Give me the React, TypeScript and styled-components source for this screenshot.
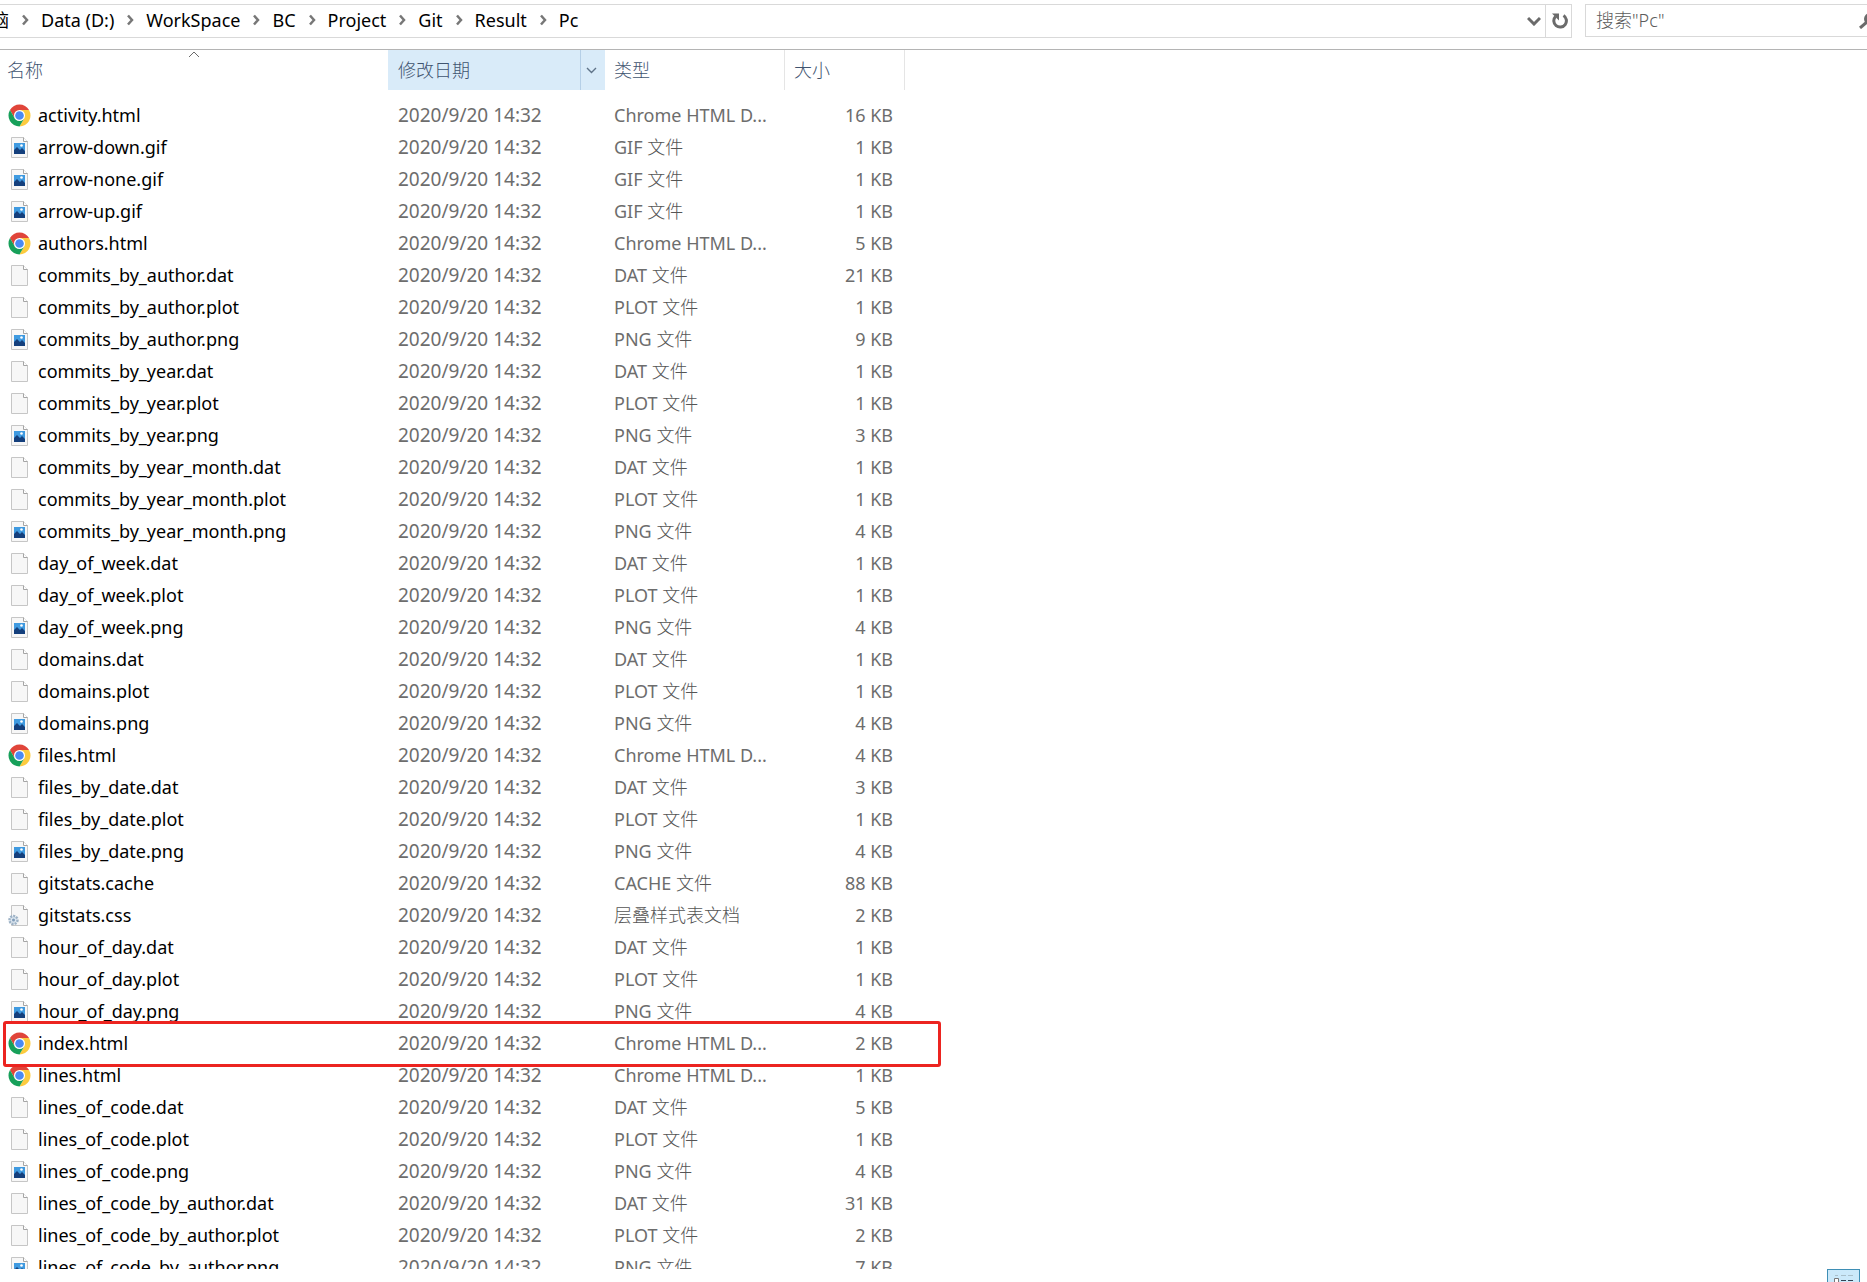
import React from "react";
import styled, { createGlobalStyle } from "styled-components";

const GlobalStyle = createGlobalStyle`
  * { box-sizing: border-box; }
  body {
    margin: 0;
    background: #fff;
    color: #000;
    font: 18px/24px "Noto Sans", "Noto Sans CJK SC", sans-serif;
  }
  button, input { font: inherit; }
`;

const Window = styled.div`
  display: flex;
  flex-direction: column;
  height: 100vh;
  overflow: hidden;
`;

const Toolbar = styled.header`
  display: flex;
  gap: 13px;
  height: 50px;
  padding-top: 4px;
  border-bottom: 1px solid #b4b4b4;
`;

const AddressBar = styled.nav`
  flex: 1;
  display: flex;
  align-items: center;
  height: 34px;
  border: 1px solid #d9d9d9;
  border-left: 0;
`;

const Crumbs = styled.ol`
  flex: 1;
  display: flex;
  align-items: center;
  margin: 0;
  padding: 0 0 2px;
  list-style: none;
`;

const Crumb = styled.li`
  display: flex;
  align-items: center;
  gap: 12px;
  margin-right: 12px;
  white-space: nowrap;
`;

const CrumbLink = styled.a<{ $clipped?: boolean }>`
  display: flex;
  justify-content: flex-end;
  width: ${(p) => (p.$clipped ? "9px" : "auto")};
  overflow: ${(p) => (p.$clipped ? "hidden" : "visible")};
  color: #000;
  text-decoration: none;
`;

const BarButton = styled.button<{ $divided?: boolean }>`
  display: flex;
  align-items: center;
  justify-content: center;
  width: ${(p) => (p.$divided ? "26px" : "22px")};
  height: 32px;
  padding: 0;
  border: 0;
  border-left: ${(p) => (p.$divided ? "1px solid #d9d9d9" : "0")};
  background: none;
  color: #6b6b6b;
`;

const SearchBox = styled.form`
  display: flex;
  align-items: center;
  width: 282px;
  height: 33px;
  border: 1px solid #d9d9d9;
  border-right: 0;
  color: #6b6b6b;
`;

const SearchInput = styled.input`
  flex: 1;
  min-width: 0;
  padding: 0 10px 2px;
  border: 0;
  outline: 0;
  background: none;
  font-weight: 300;
  &::placeholder { color: #5c5c5c; opacity: 1; }
`;

const SearchButton = styled.button`
  display: flex;
  width: 8px;
  height: 24px;
  padding: 4px 0;
  border: 0;
  overflow: hidden;
  background: none;
  color: #6b6b6b;
  svg { flex: none; }
`;

const ListPane = styled.main`
  flex: 1;
  min-height: 0;
  overflow: hidden;
`;

const FileTable = styled.table`
  width: 905px;
  table-layout: fixed;
  border-collapse: separate;
  border-spacing: 0;
`;

const HeadCell = styled.th<{ $hot?: boolean; $divided?: boolean }>`
  position: relative;
  height: 40px;
  padding: 0;
  background: ${(p) => (p.$hot ? "#d9ebf9" : "#fff")};
  border-right: ${(p) => (p.$divided ? "1px solid #e5e5e5" : "0")};
  color: #3f5470;
  font-weight: 300;
  text-align: left;
`;

const HeadInner = styled.div<{ $inset?: number }>`
  display: flex;
  align-items: center;
  justify-content: space-between;
  height: 40px;
  padding-left: ${(p) => p.$inset ?? 9}px;
`;

const SortButton = styled.button`
  padding: 0;
  border: 0;
  background: none;
  color: inherit;
`;

const FilterButton = styled.button`
  display: flex;
  align-items: center;
  width: 25px;
  height: 40px;
  padding: 0 0 0 5px;
  border: 0;
  border-left: 1px solid #b5cfe7;
  background: none;
  color: #5f7388;
`;

const SortMark = styled.span`
  position: absolute;
  top: 1px;
  left: 50%;
  display: flex;
  margin-left: -6px;
  color: #6b6b6b;
`;

const Spacer = styled.tr`
  height: 9px;
  td { padding: 0; }
`;

const Row = styled.tr`
  position: relative;
  height: 32px;
`;

const Marker = styled.span`
  position: absolute;
  z-index: 1;
  top: -6px;
  left: 3px;
  width: 938px;
  height: 46px;
  border: 3px solid #ec2420;
  border-radius: 3px;
`;

const Cell = styled.td<{ $right?: boolean }>`
  height: 32px;
  padding: 0 12px 0 9px;
  color: #6d6d6d;
  white-space: nowrap;
  text-align: ${(p) => (p.$right ? "right" : "left")};
`;

const DateCell = styled(Cell)`
  padding-left: 10px;
  font-size: 19px;
`;

const NameCell = styled(Cell)`
  padding: 0 8px;
  color: #000;
`;

const FileName = styled.div`
  display: flex;
  align-items: center;
  gap: 7px;
  svg { flex: none; }
`;

const Han = styled.span`
  color: #555;
  font-weight: 300;
`;

const StatusBar = styled.footer`
  display: flex;
  justify-content: flex-end;
  height: 13px;
  padding-right: 7px;
  overflow: hidden;
`;

const ViewButton = styled.button`
  display: flex;
  justify-content: center;
  width: 33px;
  height: 26px;
  padding: 4px 0;
  border: 1px solid #3f8fb5;
  background: #cbe9fa;
`;

const Chevron = () => (
  <svg width="8" height="12" viewBox="0 0 8 12" fill="none" stroke="#777" strokeWidth="2.5">
    <path d="M2 1.500l4 4.500-4 4.500" />
  </svg>
);

const ChromeIcon = () => (
  <svg width="23" height="23" viewBox="0 0 48 48">
    <circle cx="24" cy="24" r="23" fill="#fff" />
    <path d="M4.1 12.5A23 23 0 0 1 43.9 12.5L24 12.5 14 29.8z" fill="#e0453a" />
    <path d="M43.9 12.5A23 23 0 0 1 24 47L34 29.8 24 12.5z" fill="#fccb3f" />
    <path d="M24 47A23 23 0 0 1 4.1 12.5L14 29.8 34 29.8z" fill="#17a05a" />
    <circle cx="24" cy="24" r="11.5" fill="#fff" />
    <circle cx="24" cy="24" r="9" fill="#4a8af4" />
  </svg>
);

const Sheet = ({ children }: { children?: React.ReactNode }) => (
  <svg width="23" height="23" viewBox="0 0 23 23">
    <path d="M3.5 1.5h12l4 4v16h-16z" fill="#f7f7f7" stroke="#c6c6c6" />
    <path d="M15.5 1.5v4h4" fill="#fff" stroke="#a5a5a5" />
    {children}
  </svg>
);

const ImageIcon = () => (
  <Sheet>
    <path d="M6 7h11v11H6z" fill="#3f9ae0" />
    <path d="M6 14l3-3 3 3 2-2 3 3v3H6z" fill="#143f7c" />
    <circle cx="13.5" cy="9.5" r="1.3" fill="#fff" />
  </Sheet>
);

const CssIcon = () => (
  <Sheet>
    <circle cx="5.500" cy="16" r="4" fill="#dce6ef" stroke="#9db2c6" strokeWidth="2.5" strokeDasharray="2 1" />
    <circle cx="5.500" cy="16" r="1.5" fill="#7f9bb8" />
  </Sheet>
);

type Kind = "html" | "image" | "plain" | "css";
const icons: Record<Kind, React.FC> = { html: ChromeIcon, image: ImageIcon, plain: Sheet, css: CssIcon };

const files: [string, number][] = [
  ["activity.html", 16],
  ["arrow-down.gif", 1],
  ["arrow-none.gif", 1],
  ["arrow-up.gif", 1],
  ["authors.html", 5],
  ["commits_by_author.dat", 21],
  ["commits_by_author.plot", 1],
  ["commits_by_author.png", 9],
  ["commits_by_year.dat", 1],
  ["commits_by_year.plot", 1],
  ["commits_by_year.png", 3],
  ["commits_by_year_month.dat", 1],
  ["commits_by_year_month.plot", 1],
  ["commits_by_year_month.png", 4],
  ["day_of_week.dat", 1],
  ["day_of_week.plot", 1],
  ["day_of_week.png", 4],
  ["domains.dat", 1],
  ["domains.plot", 1],
  ["domains.png", 4],
  ["files.html", 4],
  ["files_by_date.dat", 3],
  ["files_by_date.plot", 1],
  ["files_by_date.png", 4],
  ["gitstats.cache", 88],
  ["gitstats.css", 2],
  ["hour_of_day.dat", 1],
  ["hour_of_day.plot", 1],
  ["hour_of_day.png", 4],
  ["index.html", 2],
  ["lines.html", 1],
  ["lines_of_code.dat", 5],
  ["lines_of_code.plot", 1],
  ["lines_of_code.png", 4],
  ["lines_of_code_by_author.dat", 31],
  ["lines_of_code_by_author.plot", 2],
  ["lines_of_code_by_author.png", 7],
];

const kindOf = (ext: string): Kind =>
  ext === "html" ? "html" : ext === "css" ? "css" : ext === "gif" || ext === "png" ? "image" : "plain";

const FileType = ({ ext }: { ext: string }) => {
  if (ext === "html") return <>Chrome HTML D...</>;
  if (ext === "css") return <Han>层叠样式表文档</Han>;
  return <>{ext.toUpperCase()} <Han>文件</Han></>;
};

const FileRow = ({ name, size }: { name: string; size: number }) => {
  const ext = name.split(".")[1];
  const Icon = icons[kindOf(ext)];
  return (
    <Row>
      <NameCell>
        <FileName><Icon />{name}</FileName>
        {name === "index.html" && <Marker />}
      </NameCell>
      <DateCell>2020/9/20 14:32</DateCell>
      <Cell><FileType ext={ext} /></Cell>
      <Cell $right>{size} KB</Cell>
    </Row>
  );
};

const path = ["Data (D:)", "WorkSpace", "BC", "Project", "Git", "Result", "Pc"];

export default function App() {
  return (
    <Window>
      <GlobalStyle />
      <Toolbar>
        <AddressBar aria-label="路径">
          <Crumbs>
            <Crumb><CrumbLink href="#" $clipped>脑</CrumbLink><Chevron /></Crumb>
            {path.map((part, i) => (
              <Crumb key={part}>
                <CrumbLink href="#">{part}</CrumbLink>
                {i < path.length - 1 && <Chevron />}
              </Crumb>
            ))}
          </Crumbs>
          <BarButton aria-label="历史记录">
            <svg width="14" height="10" viewBox="0 0 14 10" fill="none" stroke="currentColor" strokeWidth="3">
              <path d="M1 2l6 6 6-6" />
            </svg>
          </BarButton>
          <BarButton $divided aria-label="刷新">
            <svg width="18" height="18" viewBox="-1 0 18 18" fill="none" stroke="currentColor" strokeWidth="3">
              <path d="M12.5 3.5a6.3 6.3 0 1 1-8 1" />
              <path d="M1 1.5h7v7z" fill="currentColor" stroke="none" />
            </svg>
          </BarButton>
        </AddressBar>
        <SearchBox role="search">
          <SearchInput aria-label="搜索" placeholder={'搜索"Pc"'} />
          <SearchButton type="button" aria-label="开始搜索">
            <svg width="18" height="16" viewBox="0 0 18 16" fill="none" stroke="currentColor" strokeWidth="3">
              <circle cx="11" cy="6" r="4.5" />
              <path d="M8 9l-7 6" />
            </svg>
          </SearchButton>
        </SearchBox>
      </Toolbar>
      <ListPane>
        <FileTable>
          <colgroup>
            <col style={{ width: 388 }} />
            <col style={{ width: 217 }} />
            <col style={{ width: 180 }} />
            <col />
          </colgroup>
          <thead>
            <tr>
              <HeadCell>
                <HeadInner $inset={7}><SortButton>名称</SortButton></HeadInner>
                <SortMark>
                  <svg width="12" height="7" viewBox="0 0 12 7" fill="none" stroke="currentColor"><path d="M1 6l5-5 5 5" /></svg>
                </SortMark>
              </HeadCell>
              <HeadCell $hot>
                <HeadInner $inset={10}>
                  <SortButton>修改日期</SortButton>
                  <FilterButton aria-label="筛选">
                    <svg width="11" height="7" viewBox="0 0 11 7" fill="none" stroke="currentColor" strokeWidth="1.4"><path d="M1 1l4.500 4.500L10 1" /></svg>
                  </FilterButton>
                </HeadInner>
              </HeadCell>
              <HeadCell $divided><HeadInner><SortButton>类型</SortButton></HeadInner></HeadCell>
              <HeadCell $divided><HeadInner><SortButton>大小</SortButton></HeadInner></HeadCell>
            </tr>
          </thead>
          <tbody>
            <Spacer aria-hidden><td colSpan={4} /></Spacer>
            {files.map(([name, size]) => <FileRow key={name} name={name} size={size} />)}
          </tbody>
        </FileTable>
      </ListPane>
      <StatusBar>
        <ViewButton aria-label="详细信息">
          <svg width="22" height="14" viewBox="0 0 22 14" fill="none">
            <path d="M1.500 4.500h4v4h-4z" fill="#fff" stroke="#777" />
            <path d="M8 6.500h5M15 6.500h5" stroke="#345" />
            <path d="M2 1.500h3M8 1.500h5M15 1.500h5" stroke="#a9bfcb" />
          </svg>
        </ViewButton>
      </StatusBar>
    </Window>
  );
}
